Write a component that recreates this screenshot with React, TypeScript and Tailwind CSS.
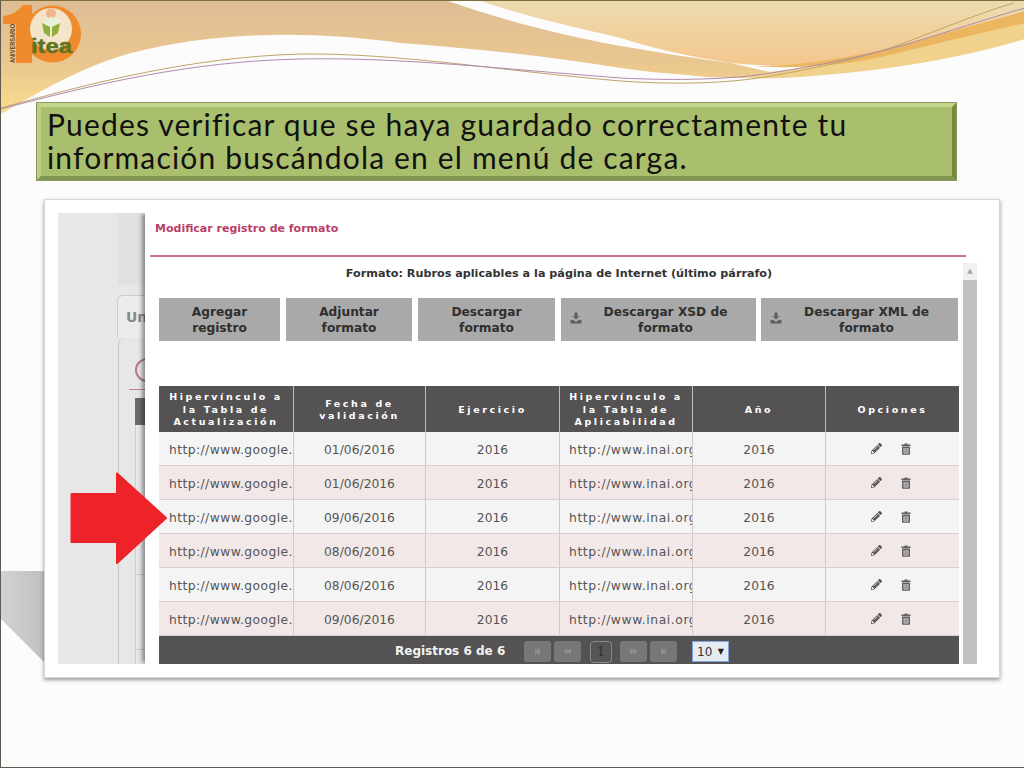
import { FaPencilAlt, FaStepBackward, FaBackward, FaForward, FaStepForward } from 'react-icons/fa'

const rows = [
  { date: '01/06/2016' },
  { date: '01/06/2016' },
  { date: '09/06/2016' },
  { date: '08/06/2016' },
  { date: '08/06/2016' },
  { date: '09/06/2016' },
]

const columns = 'grid-cols-[135px_132px_134px_133px_133px_133px]'

function SlideBackground() {
  return (
    <svg className="absolute inset-0" width="1024" height="768" viewBox="0 0 1024 768">
      <defs>
        <linearGradient id="band1" x1="0" y1="0" x2="0" y2="1">
          <stop offset="0" stopColor="#dfbd95" />
          <stop offset="0.55" stopColor="#eac78f" />
          <stop offset="1" stopColor="#fbdc8e" />
        </linearGradient>
        <linearGradient id="band2" x1="0" y1="0" x2="0" y2="1">
          <stop offset="0" stopColor="#ebdcb0" />
          <stop offset="1" stopColor="#f5c68c" />
        </linearGradient>
        <linearGradient id="shade" x1="0" y1="0" x2="1" y2="0">
          <stop offset="0" stopColor="#d2d2d2" />
          <stop offset="1" stopColor="#c0c0c0" />
        </linearGradient>
      </defs>
      <path d="M0 113 V0 H447 C510 22 570 36 620 45 C660 52 700 58 730 62 L790 76 L740 77 C720 77 700 76 687 74 C660 72 640 70 620 67 C550 56 480 48 400 42 C300 28 210 32 130 52 C80 66 40 90 0 113 Z" fill="url(#band1)" />
      <path d="M480 0 H1024 V10 C960 28 900 46 840 60 C810 66 770 66 730 62 C690 56 650 47 620 37 C570 25 520 14 480 0 Z" fill="url(#band2)" />
      <path d="M730 75 C780 70 820 65 860 56 C920 42 970 25 1024 10 V38 C950 60 880 70 800 76 C770 78 745 78 730 75 Z" fill="#f0d28c" />
      <path d="M753 65 C800 66 850 55 887 48 C930 36 980 22 1024 10 V22 C980 32 930 44 880 56 C840 65 790 68 753 65 Z" fill="#ebb65f" />
      <path d="M0 107 C90 82 190 56 300 53 C400 52 500 70 620 80 C660 83 720 84 770 75 C820 66 860 58 903 42 C950 24 985 10 1013 2" fill="none" stroke="#bfa468" strokeWidth="1" />
      <path d="M0 108 C90 84 190 60 300 58 C400 56 500 68 620 77 C660 79 720 80 770 72 C820 64 860 56 903 44 C950 30 985 18 1024 7" fill="none" stroke="#b08ab0" strokeWidth="1" />
      <path d="M0 570 H44 V662 L0 618 Z" fill="url(#shade)" />
    </svg>
  )
}

function Logo() {
  return (
    <svg className="absolute left-0 top-0" width="84" height="66" viewBox="0 0 84 66">
      <path d="M2 15 C12 14 18 9 22 4 H31 V62 H15 V23 H2 Z" fill="#ef8a2d" />
      <circle cx="51.5" cy="33" r="28.5" fill="#ef8a2d" />
      <circle cx="50" cy="28" r="21" fill="#f3e4ca" />
      <circle cx="50" cy="12.5" r="5" fill="#f2b58c" />
      <path d="M42 19 L50 16 L59 19 L58 28 H43 Z" fill="#e8f0d8" />
      <path d="M41 22 L49 26 V36 L43 32 Z M59 22 L51 26 V36 L57 32 Z" fill="#8fae3c" />
      <text x="30" y="52" fontFamily="Liberation Sans" fontWeight="700" fontSize="21" fill="#5f7420" stroke="#5f7420" strokeWidth="0.5" textLength="41" lengthAdjust="spacingAndGlyphs">itea</text>
      <text transform="translate(13.5 62) rotate(-90)" fontFamily="Liberation Sans" fontWeight="700" fontSize="7" fill="#6b4a20" textLength="39" lengthAdjust="spacingAndGlyphs">ANIVERSARIO</text>
    </svg>
  )
}

function DownloadIcon() {
  return (
    <svg width="12" height="12" viewBox="0 0 12 12" fill="#5e5e5e">
      <path d="M4.6 0.5 H7.4 V4 H9.4 L6 7.6 L2.6 4 H4.6 Z" />
      <path d="M0.5 8 H3.4 L6 10 L8.6 8 H11.5 V11.5 H0.5 Z" />
    </svg>
  )
}

function TrashIcon() {
  return (
    <svg width="10" height="12" viewBox="0 0 10 12" fill="#5f5f5f">
      <path d="M3.5 0.5 H6.5 V1.5 H9.5 V3 H0.5 V1.5 H3.5 Z" />
      <path fillRule="evenodd" d="M1 3.6 H9 V11 Q9 11.8 8.2 11.8 H1.8 Q1 11.8 1 11 Z M2.6 5 V10.4 H7.4 V5 Z" />
      <rect x="3.2" y="5" width="3.6" height="5.4" fill="#9a9a9a" />
    </svg>
  )
}

function PagerButton({ children }: { children: React.ReactNode }) {
  return (
    <div className="flex h-[21px] w-[27px] items-center justify-center rounded-[3px] bg-[#777777] text-[#939393]">
      {children}
    </div>
  )
}

function HeaderCell({ children, last }: { children: React.ReactNode; last?: boolean }) {
  return (
    <div className={`flex items-center justify-center pt-[2px] text-center ${last ? '' : 'border-r border-[#bdbdbd]'}`}>
      {children}
    </div>
  )
}

function Button({ className, icon, children }: { className: string; icon?: boolean; children: React.ReactNode }) {
  return (
    <div className={`relative flex h-[43px] items-center justify-center bg-[#a9a9a9] text-center text-[12.2px] leading-4 font-bold text-[#2f2f2f] ${className}`}>
      {icon && (
        <span className="absolute left-[9px] top-[14px]">
          <DownloadIcon />
        </span>
      )}
      {children}
    </div>
  )
}

function BackgroundPage() {
  return (
    <div className="flex w-[87px] shrink-0 flex-col overflow-hidden bg-[#e7e7e7] pl-[59px]">
      <div className="ml-px h-[72px] shrink-0 bg-[#e1e1e1]" />
      <div className="mt-[10px] flex h-[43px] shrink-0 items-center rounded-tl-md border-t border-l border-[#cccccc] bg-[#ececec] pl-[8px] text-[14px] font-semibold whitespace-nowrap text-[#8a8a8a]">
        Un
      </div>
      <div className="ml-px flex flex-1 flex-col rounded-tl-md border-l border-[#c6c6c6] pl-[16px]">
        <div className="mt-[20px] h-[24px] w-[24px] shrink-0 rounded-full border-2 border-[#b4788f]" />
        <div className="mt-[7px] -ml-[6px] h-px shrink-0 bg-[#c47d95]" />
        <div className="mt-[8px] h-[27px] shrink-0 bg-[#6a6a6a]" />
        <div className="h-[150px] shrink-0 border-b border-l border-[#cdcdcd]" />
        <div className="h-[75px] shrink-0 border-b border-l border-[#cdcdcd]" />
        <div className="flex-1 border-l border-[#cdcdcd]" />
      </div>
    </div>
  )
}

export default function App() {
  return (
    <div className="relative h-[768px] w-[1024px] overflow-hidden border-t border-b border-l border-[#5f5a4d] border-t-[#7a6d3e] bg-[#fcfcfc] pt-[102px] pl-[36px] font-['DejaVu_Sans',sans-serif]">
      <SlideBackground />
      <Logo />

      <div className="relative box-border h-[77px] w-[919px] border-[4px] border-t-[#c5d68e] border-r-[#75893f] border-b-[#7f9650] border-l-[#bccf85] bg-[#a9bf6d] pl-[6px] font-['Lato',sans-serif] text-[30px] leading-[33px] tracking-[1.17px] text-[#111111] shadow-[0_0_0_1px_#87995a]">
        <p className="mt-[1px]">Puedes verificar que se haya guardado correctamente tu</p>
        <p>información buscándola en el menú de carga.</p>
      </div>

      <div className="relative mt-[19px] ml-[7px] flex h-[479px] w-[956px] border border-[#d8d8d8] bg-white p-[13px] shadow-[0_2px_4px_rgba(0,0,0,0.4)]">
        <div className="flex min-w-0 flex-1 overflow-hidden">
          <BackgroundPage />

          <div className="relative flex min-w-0 flex-1 flex-col bg-white shadow-[-4px_0_4px_-1px_rgba(0,0,0,0.4)]">
            <div className="px-[10px] pt-[8px] text-[11px] leading-[15px] font-bold text-[#b93f68]">Modificar registro de formato</div>
            <div className="mt-[19px] mr-[20px] ml-[5px] h-[2px] shrink-0 bg-[#d0708f]" />

            <div className="flex flex-1 pl-[14px]">
              <div className="w-[800px] shrink-0">
                <div className="mt-[9px] text-center text-[11.2px] leading-[15px] font-bold text-[#333333]">
                  Formato: Rubros aplicables a la página de Internet (último párrafo)
                </div>

                <div className="mt-[17px] flex">
                  <Button className="w-[121px]">
                    Agregar
                    <br />
                    registro
                  </Button>
                  <Button className="ml-[6px] w-[126px]">
                    Adjuntar
                    <br />
                    formato
                  </Button>
                  <Button className="ml-[6px] w-[137px]">
                    Descargar
                    <br />
                    formato
                  </Button>
                  <Button icon className="ml-[6px] w-[195px] pl-[14px]">
                    Descargar XSD de
                    <br />
                    formato
                  </Button>
                  <Button icon className="ml-[5px] w-[197px] pl-[14px]">
                    Descargar XML de
                    <br />
                    formato
                  </Button>
                </div>

                <div className={`mt-[45px] grid h-[46px] ${columns} bg-[#545252] text-[9.5px] leading-[12.5px] font-bold tracking-[2.6px] text-white`}>
                  <HeaderCell>
                    Hipervínculo a
                    <br />
                    la Tabla de
                    <br />
                    Actualización
                  </HeaderCell>
                  <HeaderCell>
                    Fecha de
                    <br />
                    validación
                  </HeaderCell>
                  <HeaderCell>Ejercicio</HeaderCell>
                  <HeaderCell>
                    Hipervínculo a
                    <br />
                    la Tabla de
                    <br />
                    Aplicabilidad
                  </HeaderCell>
                  <HeaderCell>Año</HeaderCell>
                  <HeaderCell last>Opciones</HeaderCell>
                </div>

                {rows.map((row, i) => (
                  <div
                    key={i}
                    className={`grid h-[34px] ${columns} border-b border-[#d6cfcf] text-[12.3px] text-[#555555] ${i % 2 === 0 ? 'bg-[#f4f4f4]' : 'bg-[#f2e8e8]'}`}
                  >
                    <div className="flex items-center overflow-hidden border-r border-[#cfcaca] pt-[4px] pl-[10px] tracking-[0.43px] whitespace-nowrap">http://www.google.</div>
                    <div className="flex items-center justify-center border-r border-[#cfcaca] pt-[4px]">{row.date}</div>
                    <div className="flex items-center justify-center border-r border-[#cfcaca] pt-[4px]">2016</div>
                    <div className="flex items-center overflow-hidden border-r border-[#cfcaca] pt-[4px] pl-[9px] tracking-[0.6px] whitespace-nowrap">http://www.inai.org</div>
                    <div className="flex items-center justify-center border-r border-[#cfcaca] pt-[4px]">2016</div>
                    <div className="flex items-center justify-center gap-[19px] pr-[3px] text-[#5a5a5a]">
                      <FaPencilAlt size={11} />
                      <TrashIcon />
                    </div>
                  </div>
                ))}

                <div className="flex h-[29px] items-start bg-[#545252] pt-[5px] pl-[236px]">
                  <span className="w-[129px] text-[12px] leading-[21px] font-bold text-[#f2f2f2]">Registros 6 de 6</span>
                  <div className="flex gap-[3px]">
                    <PagerButton>
                      <FaStepBackward size={7} />
                    </PagerButton>
                    <PagerButton>
                      <FaBackward size={7} />
                    </PagerButton>
                  </div>
                  <div className="ml-[9px] flex h-[22px] w-[22px] items-center justify-center rounded-[4px] border border-[#8a8a8a] bg-[#555555] font-['DejaVu_Serif',serif] text-[12px] text-[#2e2e2e]">
                    1
                  </div>
                  <div className="ml-[8px] flex gap-[3px]">
                    <PagerButton>
                      <FaForward size={7} />
                    </PagerButton>
                    <PagerButton>
                      <FaStepForward size={7} />
                    </PagerButton>
                  </div>
                  <div className="ml-[15px] flex h-[21px] w-[37px] items-center justify-between border border-[#7fa5dc] bg-[#e6ebf2] px-[4px] text-[12px] text-[#333333]">
                    10
                    <span className="text-[8px] text-[#222222]">▼</span>
                  </div>
                </div>
              </div>

              <div className="mt-[6px] ml-[4px] flex w-[14px] shrink-0 flex-col bg-[#c1c1c1]">
                <div className="flex h-[17px] items-center justify-center bg-[#f1f1f1] text-[7px] text-[#a3a3a3]">▲</div>
              </div>
            </div>
          </div>
        </div>
      </div>

      <svg className="absolute left-[69px] top-[471px]" width="98" height="93" viewBox="0 0 98 93">
        <path d="M1.5 22 H47 V1.5 L96 46 L47 91 V70 H1.5 Z" fill="#ee2229" stroke="#ee2229" strokeWidth="2" strokeLinejoin="round" />
      </svg>
    </div>
  )
}
